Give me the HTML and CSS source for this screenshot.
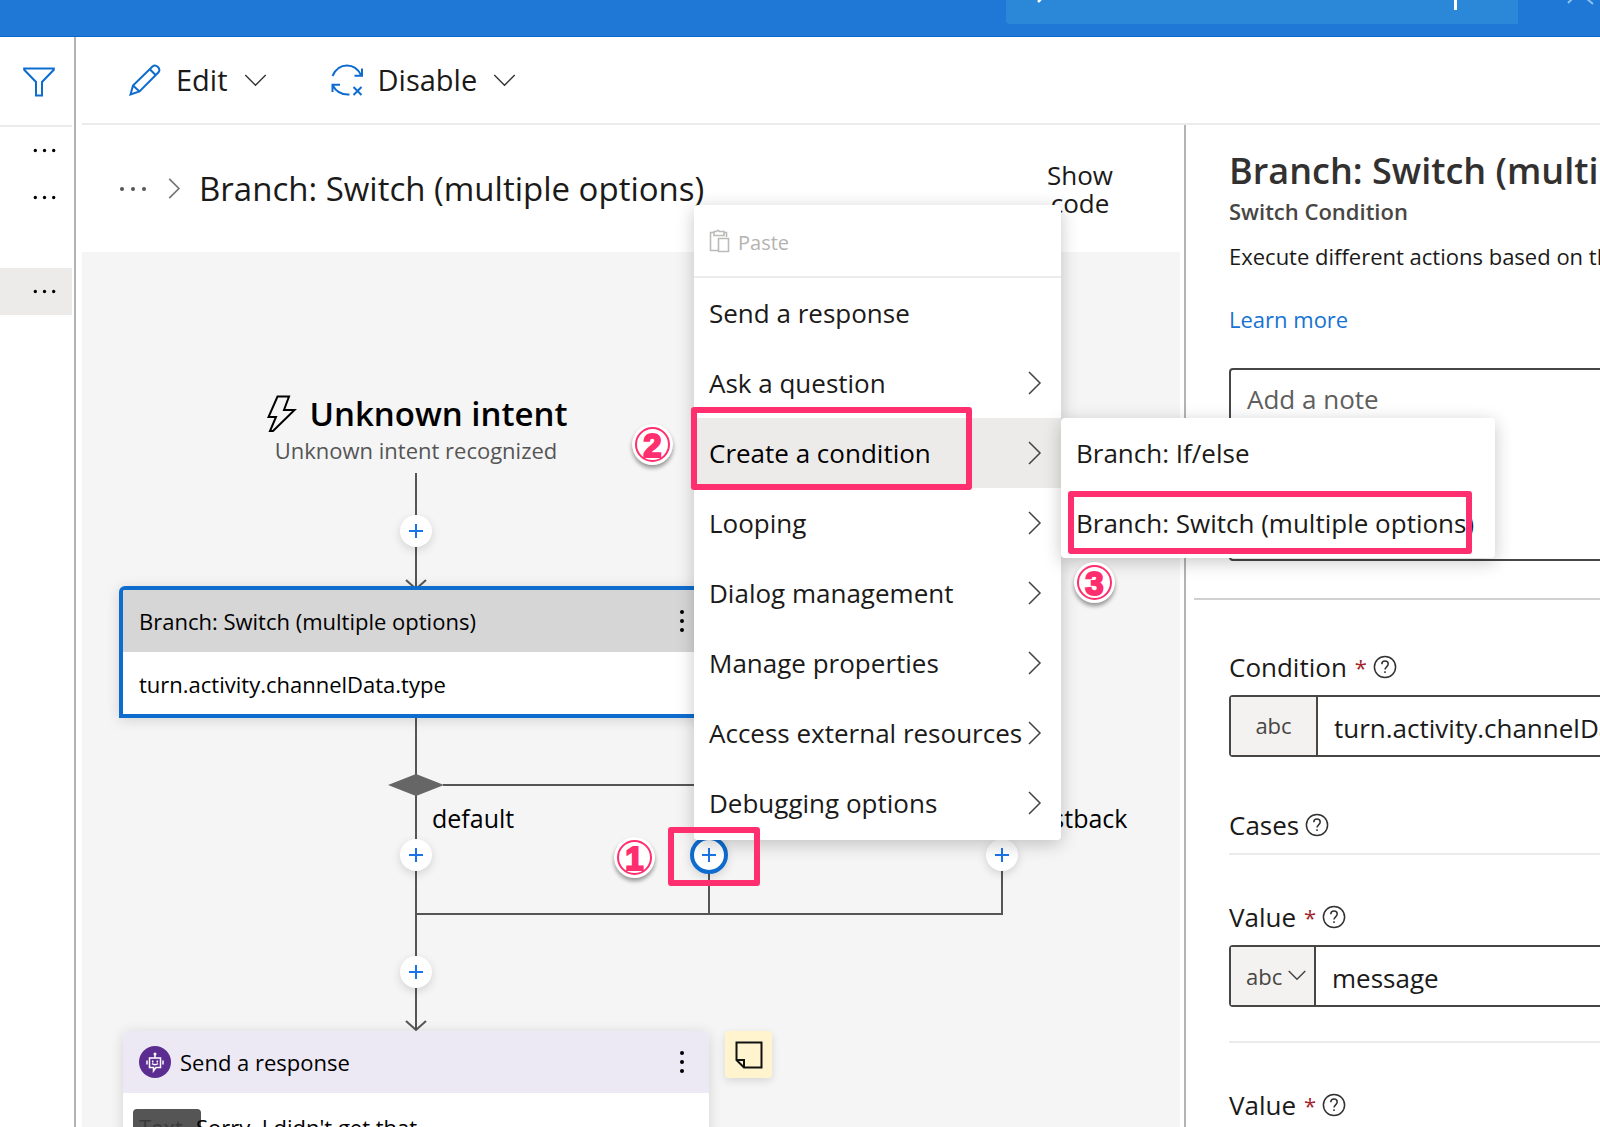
FILE: index.html
```html
<!DOCTYPE html>
<html lang="en">
<head>
<meta charset="utf-8">
<meta name="viewport" content="width=device-width, initial-scale=1">
<title>Bot designer</title>
<link rel="stylesheet" href="styles.css">
</head>
<body>
<svg class="defs" aria-hidden="true">
  <symbol id="chev-right" viewBox="0 0 14 24"><path d="M1 1l11 11L1 23"/></symbol>
  <symbol id="chev-down" viewBox="0 0 24 14"><path d="M1 1l11 11L23 1"/></symbol>
  <symbol id="plus" viewBox="0 0 16 16"><path d="M8 1v14M1 8h14"/></symbol>
  <symbol id="dots" viewBox="0 0 30 6"><circle cx="4" cy="3" r="2"/><circle cx="15" cy="3" r="2"/><circle cx="26" cy="3" r="2"/></symbol>
  <symbol id="help" viewBox="0 0 24 24"><circle cx="12" cy="12" r="10.6"/><path d="M8.800 9.300c0-2 1.400-3.200 3.200-3.200s3.200 1.200 3.200 3c0 2.600-3.200 2.900-3.200 5.500M12 16.300v1.700"/></symbol>
</svg>
<div class="app">
  <header class="topbar">
    <div class="search">
      <svg class="search-glass" viewBox="0 0 8 4"><path d="M1 2l3-3" stroke="#fff" stroke-width="2.500"/></svg>
      <span class="search-sep"></span>
    </div>
    <svg class="star" viewBox="0 0 30 6"><path d="M2 3L7-2M27 4L20-2" fill="none" stroke="#8cc2ee" stroke-width="2"/></svg>
  </header>
  <div class="workspace">
    <nav class="sidebar" aria-label="Dialogs">
      <button class="filter" aria-label="Filter">
        <svg width="32" height="30" viewBox="0 0 32 30"><path d="M1.200 1.500h29.600v1.300L19 15v13.500h-6V15L1.200 2.800z" fill="none" stroke="#0f6ccf" stroke-width="2"/></svg>
      </button>
      <button class="tree-row" aria-label="More"><svg><use href="#dots"/></svg></button>
      <button class="tree-row" aria-label="More"><svg><use href="#dots"/></svg></button>
      <div class="tree-row"></div>
      <button class="tree-row selected" aria-label="More"><svg><use href="#dots"/></svg></button>
    </nav>
    <main class="main">
      <div class="toolbar">
        <button class="tool">
          <svg class="tool-icon" viewBox="0 0 32 32"><path d="M1.500 30.500L4 21.500 23.500 2.500Q26 .3 28.700 2.700 31.600 5.600 29.500 8.300L10.500 27.500zM20.800 5.200l6 6M4 21.500l6.500 6"/></svg>
          <span>Edit</span><svg class="chev-down"><use href="#chev-down"/></svg>
        </button>
        <button class="tool">
          <svg class="tool-icon" viewBox="0 0 32 32"><path d="M1.500 12C5 4 10 1.500 16 1.500c6 0 11 3.500 14 9.500M31 4.500v7.200h-7.500M1.500 28v-7.200H9M1.800 21.500C5 27.500 10 31 18.500 30.500M22.500 23l8 8M30.500 23l-8 8"/></svg>
          <span>Disable</span><svg class="chev-down"><use href="#chev-down"/></svg>
        </button>
      </div>
      <div class="editor">
        <section class="flow">
          <div class="crumbs">
            <button class="crumb-more" aria-label="Show path"><svg><use href="#dots"/></svg></button>
            <svg class="crumb-sep"><use href="#chev-right"/></svg>
            <span class="crumb-current">Branch: Switch (multiple options)</span>
            <button class="show-code">Show code</button>
          </div>
          <div class="canvas">
            <svg class="edges" width="1098" height="1000" viewBox="0 0 1098 1000" fill="none" stroke="#555" stroke-width="2">
              <path d="M334 221v115M324 328l10 9 10-9M334 466v66M361 533h559v52M334 540v237M627 603v59M920 603v59M334 662h587M334 662v115M324 769l10 9 10-9"/>
              <path d="M306 533l28-11 28 11-28 11z" fill="#666" stroke="none"/>
            </svg>
            <div class="node trigger">
              <div class="trigger-name"><svg width="30" height="38" viewBox="0 0 30 38"><path d="M10.500 1.500H22L17 15h10.500L6 36H3l6-14H1.500z" fill="none" stroke="#000" stroke-width="2"/></svg><span>Unknown intent</span></div>
              <div class="trigger-desc">Unknown intent recognized</div>
            </div>
            <button class="node add add-1" aria-label="Add action"><svg><use href="#plus"/></svg></button>
            <article class="node card card-switch">
              <header class="card-head"><span>Branch: Switch (multiple options)</span><button class="kebab" aria-label="Menu"><i></i><i></i><i></i></button></header>
              <div class="card-body">turn.activity.channelData.type</div>
            </article>
            <span class="node label label-default">default</span>
            <span class="node label label-postback">postback</span>
            <button class="node add add-2" aria-label="Add action"><svg><use href="#plus"/></svg></button>
            <button class="node add add-3 focused" aria-label="Add action"><svg><use href="#plus"/></svg></button>
            <button class="node add add-4" aria-label="Add action"><svg><use href="#plus"/></svg></button>
            <button class="node add add-5" aria-label="Add action"><svg><use href="#plus"/></svg></button>
            <article class="node card card-send">
              <header class="card-head">
                <svg class="bot" viewBox="0 0 32 32"><circle cx="16" cy="16" r="16" fill="#5c2d91"/><circle cx="16" cy="8" r="1.500" fill="#fff"/><g fill="none" stroke="#fff" stroke-width="1.500"><path d="M16 9v3M10.500 12h11v9.500H17L14.500 25v-3.500h-4zM8 14.500v4M24 14.500v4M13.700 14.500v2M18.300 14.500v2M13 17.700q3 2 6 0"/></g></svg>
                <span>Send a response</span><button class="kebab" aria-label="Menu"><i></i><i></i><i></i></button>
              </header>
              <div class="card-body response"><span class="chip">Text</span><span>Sorry, I didn't get that.</span></div>
            </article>
            <button class="node note" aria-label="Note"><svg width="28" height="28" viewBox="0 0 28 28"><path d="M1.500 1.500h25v25H9L1.500 19zM1.500 19H9v7.500" fill="none" stroke="#111" stroke-width="2"/></svg></button>
          </div>
        </section>
        <aside class="panel">
          <div class="panel-top">
            <h1>Branch: Switch (multiple options)</h1>
            <h2>Switch Condition</h2>
            <p>Execute different actions based on the value</p>
            <a href="#">Learn more</a>
            <textarea placeholder="Add a note" aria-label="Add a note"></textarea>
          </div>
          <div class="panel-form">
            <div class="label-row"><label for="cond">Condition</label><b>*</b><svg class="help"><use href="#help"/></svg></div>
            <div class="field"><span class="type">abc</span><input id="cond" type="text" value="turn.activity.channelData.type"></div>
            <div class="label-row cases"><span>Cases</span><svg class="help"><use href="#help"/></svg></div>
            <div class="case">
              <div class="label-row"><label for="v1">Value</label><b>*</b><svg class="help"><use href="#help"/></svg></div>
              <div class="field"><span class="type-select"><select aria-label="Value type"><option>abc</option></select><svg><use href="#chev-down"/></svg></span><input id="v1" type="text" value="message"></div>
            </div>
            <div class="case">
              <div class="label-row"><label for="v2">Value</label><b>*</b><svg class="help"><use href="#help"/></svg></div>
              <div class="field"><span class="type-select"><select aria-label="Value type"><option>abc</option></select><svg><use href="#chev-down"/></svg></span><input id="v2" type="text" value="postback"></div>
            </div>
          </div>
        </aside>
      </div>
    </main>
  </div>
  <div class="menu" role="menu">
    <button class="paste" role="menuitem" disabled>
      <svg width="22" height="24" viewBox="0 0 22 24"><path d="M9 21.500H1.500V3.500H5M15 3.500h2.500V8M5 2.500h2.500Q9 .2 10.500 2.500H15v4H5zM9.500 9.500h10v13h-10z" fill="none" stroke="#bdbbb9" stroke-width="1.600"/></svg>
      <span>Paste</span>
    </button>
    <button role="menuitem">Send a response</button>
    <button role="menuitem">Ask a question<svg><use href="#chev-right"/></svg></button>
    <button role="menuitem" class="open">Create a condition<svg><use href="#chev-right"/></svg></button>
    <button role="menuitem">Looping<svg><use href="#chev-right"/></svg></button>
    <button role="menuitem">Dialog management<svg><use href="#chev-right"/></svg></button>
    <button role="menuitem">Manage properties<svg><use href="#chev-right"/></svg></button>
    <button role="menuitem">Access external resources<svg><use href="#chev-right"/></svg></button>
    <button role="menuitem">Debugging options<svg><use href="#chev-right"/></svg></button>
  </div>
  <div class="menu submenu" role="menu">
    <button role="menuitem">Branch: If/else</button>
    <button role="menuitem">Branch: Switch (multiple options)</button>
  </div>
  <div class="mark mark-1"></div>
  <div class="mark mark-2"></div>
  <div class="mark mark-3"></div>
  <span class="step step-1">1</span>
  <span class="step step-2">2</span>
  <span class="step step-3">3</span>
</div>
</body>
</html>
```
FILE: styles.css
```css
* { box-sizing: border-box; }
body {
  margin: 0;
  font: 26px/36px "Open Sans", "Noto Sans", sans-serif;
  color: #1b1a19;
  background: #fff;
}
button { border: 0; padding: 0; background: none; font: inherit; color: inherit; text-align: left; }
svg { display: block; flex: none; }
.defs { position: absolute; width: 0; height: 0; }
.app { position: relative; display: flex; flex-direction: column; height: 100vh; overflow: hidden; }

/* top bar */
.topbar {
  display: flex; justify-content: flex-end; align-items: flex-start;
  flex: none; height: 37px;
  background: #1f78d6; border-bottom: 1px solid #0b66cc;
}
.search { display: flex; justify-content: space-between; width: 512px; height: 24px; padding: 0 61px 0 31px; background: #2b88d8; border-radius: 0 0 0 4px; }
.search-glass { width: 8px; height: 4px; }
.search-sep { width: 3px; height: 10px; background: #fff; }
.star { width: 30px; height: 6px; margin: 0 4px 0 48px; }

.workspace { display: flex; flex: 1; min-height: 0; }

/* sidebar */
.sidebar { flex: none; width: 76px; padding-right: 2px; border-right: 2px solid #b3b3b3; }
.filter { display: flex; align-items: center; width: 72px; height: 90px; padding: 2px 0 0 23px; border-bottom: 2px solid #edebe9; }
.tree-row { display: flex; align-items: center; justify-content: flex-end; width: 72px; height: 47px; padding-right: 15px; }
.tree-row svg { width: 25px; height: 5px; }
.tree-row.selected { background: #edebe9; }

/* main column */
.main { display: flex; flex-direction: column; flex: 1; min-width: 0; padding-left: 6px; }
.toolbar { display: flex; gap: 64px; flex: none; height: 88px; padding-left: 47px; border-bottom: 2px solid #edebe9; }
.tool { display: flex; align-items: center; gap: 16px; font-size: 29px; }
.tool-icon { width: 32px; height: 32px; margin-right: -1px; fill: none; stroke: #0f6ccf; stroke-width: 2; }
.chev-down { width: 23px; height: 13px; fill: none; stroke: #333; stroke-width: 1.5; }
.editor { display: flex; flex: 1; min-height: 0; }
.flow { display: flex; flex-direction: column; flex: 1; min-width: 0; padding-right: 4px; }
.crumbs { display: flex; align-items: center; flex: none; height: 127px; padding: 0 55px 0 34px; }
.crumb-more svg { width: 34px; height: 6px; fill: #555; }
.crumb-sep { width: 13px; height: 21px; margin: 0 18px; fill: none; stroke: #777; stroke-width: 2; }
.crumb-current { flex: 1; font-size: 33px; line-height: 44px; white-space: nowrap; }
.show-code { width: 90px; line-height: 28px; text-align: center; }

/* flow canvas */
.canvas { position: relative; flex: 1; overflow: hidden; background: #f5f5f5; color: #000; }
.edges { position: absolute; left: 0; top: 0; }
.node { position: absolute; }
.trigger { left: 134px; top: 138px; width: 400px; text-align: center; }
.trigger-name { display: flex; justify-content: center; align-items: center; gap: 12px; height: 44px; padding: 3px 0 0 3px; font-size: 33px; font-weight: 600; }
.trigger-desc { font-size: 22px; line-height: 32px; color: #555; }
.add { width: 32px; height: 32px; border-radius: 50%; background: #fff; box-shadow: 0 3px 10px rgba(0,0,0,.14); }
.add svg { width: 16px; height: 16px; margin: 0 auto; fill: none; stroke: #1a73e8; stroke-width: 2; }
.add-1 { left: 318px; top: 263px; }
.add-2 { left: 318px; top: 587px; }
.add-3 { left: 608px; top: 584px; }
.add-4 { left: 904px; top: 587px; }
.add-5 { left: 318px; top: 704px; }
.add.focused { width: 38px; height: 38px; border: 4px solid #0f6ccf; }
.card { box-shadow: 0 2px 14px rgba(0,0,0,.14); border-radius: 6px 6px 0 0; background: #fff; overflow: hidden; font-size: 22px; }
.card-head { display: flex; align-items: center; height: 62px; padding: 0 25px 0 16px; gap: 9px; }
.kebab { display: grid; gap: 5px; margin-left: auto; }
.kebab i { width: 4px; height: 4px; border-radius: 50%; background: #000; }
.card-switch { left: 37px; top: 334px; width: 594px; border: 4px solid #0f6ccf; }
.card-switch .card-head { background: #d6d6d6; }
.card-body { display: flex; align-items: center; height: 62px; padding: 2px 16px 0; }
.card-send { left: 41px; top: 779px; width: 586px; }
.card-send .card-head { background: #ece9f4; }
.bot { width: 32px; height: 32px; }
.card-body.response { align-items: flex-start; padding: 16px 10px 0; }
.chip { width: 68px; height: 36px; margin-right: -5px; padding-left: 6px; border-radius: 4px; background: #555; color: #3a3a3a; }
.note { display: grid; place-items: center; left: 643px; top: 779px; width: 47px; height: 47px; background: #fff4ce; border-radius: 4px; box-shadow: 0 3px 8px rgba(0,0,0,.12); }
.label { font-size: 25px; }
.label-default { left: 350px; top: 548px; }
.label-postback { left: 940px; top: 548px; }

/* property panel */
.panel { flex: none; width: 416px; border-left: 2px solid #b3b3b3; overflow: hidden; }
.panel-top { margin-left: 8px; padding: 22px 0 37px 35px; border-bottom: 2px solid #d2d0ce; white-space: nowrap; }
.panel h1 { margin: 0; font-size: 36px; line-height: 48px; font-weight: 600; color: #323130; }
.panel h2 { margin: 0 0 13px; font-size: 22px; line-height: 32px; font-weight: 600; color: #484644; }
.panel p { margin: 0 0 31px; font-size: 22px; line-height: 32px; }
.panel a { display: block; font-size: 22px; line-height: 32px; color: #1673d1; text-decoration: none; }
.panel textarea { display: block; width: calc(100% + 40px); height: 193px; margin-top: 33px; padding: 11px 16px; border: 2px solid #484644; border-radius: 4px; font: inherit; resize: none; background: #fff; }
textarea::placeholder { color: #605e5c; opacity: 1; }
.panel-form { padding: 49px 0 0 43px; }
.label-row { display: flex; align-items: center; gap: 8px; height: 36px; margin-bottom: 10px; }
.label-row b { font-weight: 400; font-size: 22px; color: #a4262c; }
.help { width: 24px; height: 24px; margin-left: -2px; fill: none; stroke: #323130; stroke-width: 1.5; }
.field { display: flex; width: calc(100% + 40px); height: 62px; border: 2px solid #484644; border-radius: 4px; }
.field input { flex: 1; min-width: 0; padding: 3px 16px 0; border: 0; background: #fff; font: inherit; color: inherit; }
.type, .type-select { flex: none; border-right: 2px solid #484644; background: #f3f2f1; color: #484644; font-size: 22px; line-height: 56px; }
.type { width: 87px; text-align: center; }
.type-select { position: relative; width: 85px; }
.type-select select { width: 100%; height: 100%; padding: 0 15px; border: 0; appearance: none; background: none; font: inherit; color: inherit; }
.type-select svg { position: absolute; right: 8px; top: 23px; width: 18px; height: 11px; fill: none; stroke: #444; stroke-width: 2; pointer-events: none; }
.cases { margin-top: 50px; }
.case { padding: 44px 0 34px; border-top: 2px solid #edebe9; }

/* context menus */
.menu { position: absolute; left: 694px; top: 205px; width: 367px; padding-bottom: 2px; background: #fff; border-radius: 4px; box-shadow: 0 4px 18px rgba(0,0,0,.22); }
.menu button { display: flex; align-items: center; justify-content: space-between; width: 100%; height: 70px; padding: 0 19px 0 15px; white-space: nowrap; }
.menu button svg { width: 14px; height: 24px; fill: none; stroke: #444; stroke-width: 1.5; }
.menu .paste { justify-content: flex-start; gap: 7px; height: 73px; border-bottom: 2px solid #edebe9; font-size: 20px; color: #b5b3b1; }
.menu .paste span { padding-top: 4px; }
.menu .paste svg { width: 22px; height: 24px; }
.menu .open { background: #edebe9; color: #000; }
.submenu { left: 1061px; top: 418px; width: 434px; padding-bottom: 0; }

/* numbered callouts */
.mark { position: absolute; border: 6px solid #ff2e6e; border-radius: 3px; }
.mark-1 { left: 668px; top: 827px; width: 92px; height: 59px; }
.mark-2 { left: 691px; top: 407px; width: 281px; height: 83px; }
.mark-3 { left: 1068px; top: 491px; width: 404px; height: 63px; }
.step {
  position: absolute; display: grid; place-items: center;
  width: 35px; height: 35px; border: 2px solid #ff2e6e; border-radius: 50%;
  background: #fff; color: #ff2e6e;
  box-shadow: 0 0 0 3px #fff, 0 3px 4px 3px rgba(0,0,0,.4);
  font: bold 33px/33px "Liberation Sans", Arial, sans-serif;
  -webkit-text-stroke: 2px #ff2e6e;
}
.step-1 { left: 617px; top: 840px; }
.step-2 { left: 635px; top: 427px; }
.step-3 { left: 1077px; top: 565px; }
```
